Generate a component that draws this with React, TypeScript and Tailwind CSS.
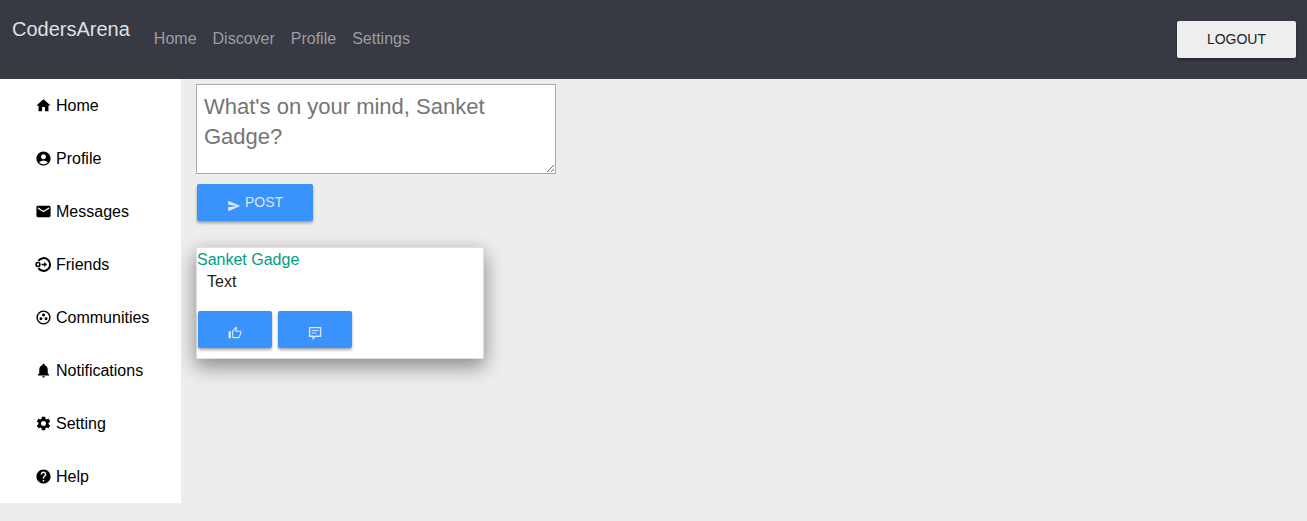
import React from "react";
import {
  MdAccountCircle,
  MdEmail,
  MdHelp,
  MdHome,
  MdNotifications,
  MdOutlineThumbUp,
  MdSend,
  MdSettings,
} from "react-icons/md";

// Ring open on the left with a small circle in the gap and an arrow inside.
function FriendsIcon() {
  return (
    <svg width="17" height="17" viewBox="0 0 17 17" fill="none" stroke="currentColor" aria-hidden="true">
      <path d="M3.4 4.9A6.4 6.4 0 1 1 3.4 12.1" strokeWidth="2" />
      <circle cx="3" cy="8.5" r="1.9" strokeWidth="1.5" />
      <path d="M6.6 8.5h3.6" strokeWidth="1.5" />
      <path d="M9.2 5.9l2.9 2.6-2.9 2.6z" fill="currentColor" stroke="none" />
    </svg>
  );
}

// Ring holding three dots, one above two.
function CommunitiesIcon() {
  return (
    <svg width="17" height="17" viewBox="0 0 24 24" fill="currentColor" aria-hidden="true">
      <circle cx="12" cy="12" r="9" fill="none" stroke="currentColor" strokeWidth="2" />
      <circle cx="12" cy="8.6" r="2.1" />
      <circle cx="8.4" cy="13.8" r="2.1" />
      <circle cx="15.6" cy="13.8" r="2.1" />
    </svg>
  );
}

// Speech bubble with two lines of text and a tail on its lower left.
function CommentIcon() {
  return (
    <svg
      width="14"
      height="14"
      viewBox="0 0 14 14"
      fill="none"
      stroke="currentColor"
      className="mt-[9px]"
      aria-hidden="true"
    >
      <path d="M1.6 1.6h11v8.6H7.4L5.2 12.4V10.2H1.6z" strokeWidth="1.4" />
      <path d="M3.6 4.5h7M3.6 7h5" strokeWidth="1.2" />
    </svg>
  );
}

const topLinks = ["Home", "Discover", "Profile", "Settings"];

const sideLinks: { label: string; icon: React.ReactNode }[] = [
  { label: "Home", icon: <MdHome size={17} /> },
  { label: "Profile", icon: <MdAccountCircle size={17} /> },
  { label: "Messages", icon: <MdEmail size={17} /> },
  { label: "Friends", icon: <FriendsIcon /> },
  { label: "Communities", icon: <CommunitiesIcon /> },
  { label: "Notifications", icon: <MdNotifications size={17} /> },
  { label: "Setting", icon: <MdSettings size={17} /> },
  { label: "Help", icon: <MdHelp size={17} /> },
];

const buttonBase =
  "flex h-[37px] items-center rounded-[2px] px-[30px] pb-0.5 text-sm uppercase shadow-[0_2px_3px_rgba(0,0,0,0.35)]";

export default function App() {
  return (
    <div className="min-h-screen bg-[#ededed] font-['Liberation_Sans',Arial,sans-serif] text-base text-[#212121]">
      <header className="flex h-[79px] items-center justify-between bg-[#373a43] pr-[11px] pl-3">
        <nav className="flex items-center pb-0.5">
          <a href="#" className="mr-6 pb-5 text-xl text-[#dfe0e1]">
            CodersArena
          </a>
          <ul className="flex gap-4 text-[#9b9da1]">
            {topLinks.map((label) => (
              <li key={label}>
                <a href="#">{label}</a>
              </li>
            ))}
          </ul>
        </nav>
        <button type="button" className={`${buttonBase} bg-[#eeeeee] text-[#212121]`}>
          Logout
        </button>
      </header>

      <div className="flex items-start">
        <aside className="w-[181px] shrink-0 bg-white">
          <ul>
            {sideLinks.map(({ label, icon }) => (
              <li key={label}>
                <a href="#" className="flex h-[53px] items-center gap-1 pl-[35px] text-black">
                  <span className="pb-px">{icon}</span>
                  <span>{label}</span>
                </a>
              </li>
            ))}
          </ul>
        </aside>

        <main className="min-w-0 flex-1 px-[15px] pt-[5px]">
          <form onSubmit={(event) => event.preventDefault()}>
            <textarea
              aria-label="New post"
              placeholder="What's on your mind, Sanket Gadge?"
              className="block h-[90px] w-[360px] max-w-full resize border border-[#a9a9a9] bg-white px-[7px] py-[7px] text-[22px] leading-[30px] placeholder:text-[#757575]"
            />
            <button type="submit" className={`${buttonBase} mt-[10px] ml-px gap-1 bg-[#3a92fc] text-[#d8e9fe]`}>
              <MdSend size={14} className="mt-[9px]" aria-hidden="true" />
              Post
            </button>
          </form>

          <article className="mt-[26px] w-[288px] max-w-full border border-[#dfdfdf] bg-white pb-[10px] shadow-[0_8px_17px_rgba(0,0,0,0.25),0_6px_20px_rgba(0,0,0,0.22)]">
            <a href="#" className="block text-[#009e83]">
              Sanket Gadge
            </a>
            <p className="-mt-0.5 pl-[10px]">Text</p>
            <div className="mt-[17px] flex gap-1.5 pl-px">
              <button type="button" aria-label="Like" className={`${buttonBase} bg-[#3a92fc] text-[#d8e9fe]`}>
                <MdOutlineThumbUp size={14} className="mt-[9px]" />
              </button>
              <button type="button" aria-label="Comment" className={`${buttonBase} bg-[#3a92fc] text-[#d8e9fe]`}>
                <CommentIcon />
              </button>
            </div>
          </article>
        </main>
      </div>
    </div>
  );
}
